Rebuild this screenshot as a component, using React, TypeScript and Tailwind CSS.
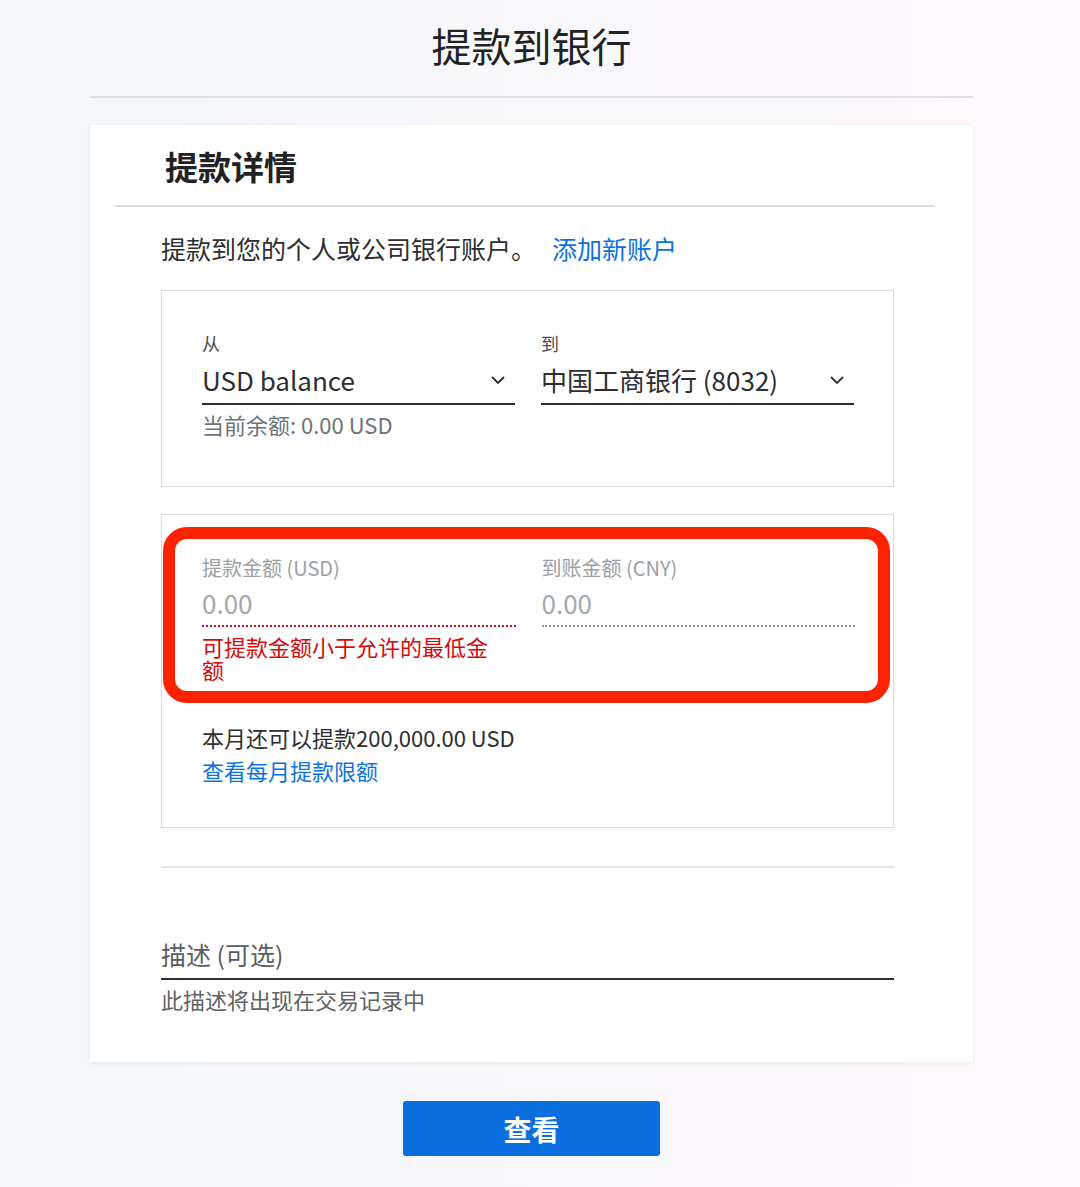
import React from 'react';

const Chevron: React.FC = () => (
  <svg width="16" height="10" viewBox="0 0 16 10" fill="none" className="shrink-0 mr-[9px]">
    <polyline points="2,2 8,8 14,2" stroke="#2c2e2f" strokeWidth="1.8" fill="none" />
  </svg>
);

interface SelectProps {
  label: string;
  value: string;
}

const SelectField: React.FC<SelectProps> = ({ label, value }) => (
  <div>
    <div className="text-[18px] leading-[25px] text-[#4a4d4f]">{label}</div>
    <div className="mt-[7px] flex items-center justify-between border-b-2 border-[#2c2e2f] pb-[6px]">
      <span className="text-[26px] leading-[34px] text-[#2c2e2f]">{value}</span>
      <Chevron />
    </div>
  </div>
);

interface AmountProps {
  label: string;
  error?: string;
}

const AmountField: React.FC<AmountProps> = ({ label, error }) => (
  <div>
    <div className="text-[20px] leading-[28px] text-[#9a9fa3]">{label}</div>
    <div
      className={`mt-[4px] pb-[5px] border-b-2 border-dotted ${
        error ? 'border-[#c8102e]' : 'border-[#8a8f93]'
      }`}
    >
      <span className="text-[26px] leading-[34px] text-[#a3a8ab]">0.00</span>
    </div>
    {error && (
      <div className="mt-[8px] max-w-[300px] text-[22px] leading-[23px] text-[#d50b0b]">{error}</div>
    )}
  </div>
);

const App: React.FC = () => {
  return (
    <div className="min-h-[1187px] w-[1080px] bg-linear-to-r from-[#f3f7fa] to-[#fdf8fb] font-['Noto_Sans_CJK_SC','Noto_Sans',sans-serif] text-[#2c2e2f]">
      <div className="ml-[90px] w-[883px] pt-[21px]">
        {/* Page title */}
        <h1 className="text-center text-[40px] leading-[48px] font-normal text-[#222]">提款到银行</h1>
        <div className="mt-[27px] h-[2px] bg-[#dcdfe2]" />

        {/* Card */}
        <div className="mt-[27px] bg-white px-[25px] pt-[21px] pb-[48px] shadow-[0_1px_4px_rgba(0,0,0,0.08)]">
          <h2 className="pl-[50px] text-[33px] leading-[40px] font-bold text-[#222]">提款详情</h2>
          <div className="mt-[19px] h-[2px] bg-[#dadcde] mr-[13px]" />

          <div className="ml-[46px] w-[733px]">
            <p className="mt-[24px] text-[25px] leading-[35px] text-[#2c2e2f]">
              提款到您的个人或公司银行账户。
              <a className="ml-[16px] text-[#0a72e0]">添加新账户</a>
            </p>

            {/* From / To */}
            <div className="mt-[24px] border border-[#d8dadc] pl-[40px] pr-[39px] pt-[40px] pb-[47px]">
              <div className="grid grid-cols-2 gap-x-[26px]">
                <SelectField label="从" value="USD balance" />
                <SelectField label="到" value="中国工商银行 (8032)" />
              </div>
              <div className="mt-[4px] text-[22px] leading-[30px] text-[#6c7378]">当前余额: 0.00 USD</div>
            </div>

            {/* Amounts */}
            <div className="mt-[27px] border border-[#d8dadc] pt-[12px] pb-[41px]">
              <div className="ml-[1px] mr-[3px] rounded-[24px] border-[12px] border-[#ff2200] pl-[27px] pr-[23px] pt-[15px] pb-[10px]">
                <div className="grid grid-cols-2 gap-x-[26px]">
                  <AmountField label="提款金额 (USD)" error="可提款金额小于允许的最低金额" />
                  <AmountField label="到账金额 (CNY)" />
                </div>
              </div>
              <div className="pl-[40px] mt-[18px]">
                <div className="text-[22px] leading-[32px] text-[#2c2e2f]">本月还可以提款200,000.00 USD</div>
                <a className="block mt-[1px] text-[22px] leading-[32px] text-[#0a72e0]">查看每月提款限额</a>
              </div>
            </div>

            <div className="mt-[38px] h-[2px] bg-[#e2e4e6]" />

            {/* Description */}
            <div className="mt-[69px] border-b-2 border-[#2c2e2f] pb-[7px] text-[25px] leading-[34px] text-[#5a5e61]">
              描述 (可选)
            </div>
            <div className="mt-[4px] text-[22px] leading-[30px] text-[#5f6366]">此描述将出现在交易记录中</div>
          </div>
        </div>

        {/* Button */}
        <div className="mt-[39px] flex justify-center">
          <button className="h-[55px] w-[257px] rounded-[3px] bg-[#0a6fde] text-[28px] font-bold text-white">
            查看
          </button>
        </div>
      </div>
    </div>
  );
};

export default App;
